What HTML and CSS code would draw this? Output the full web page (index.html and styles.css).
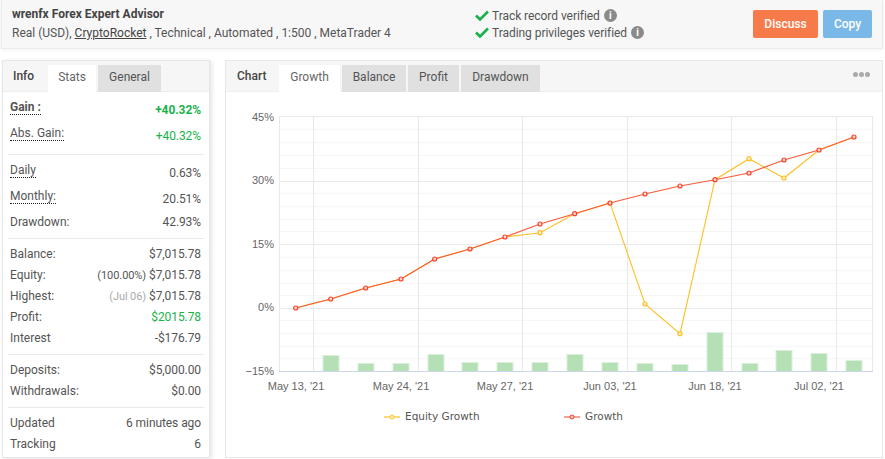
FILE: index.html
```html
<!DOCTYPE html>
<html>

<head>
    <title>wrenfx Forex Expert Advisor</title>
    <link rel="stylesheet" href="styles.css">
</head>

<body>
    <div class="top-bar">
        <div class="system-info">
            <div class="system-name">wrenfx Forex Expert Advisor</div>
            <div class="system-meta">Real (USD), <a href="#">CryptoRocket</a> , Technical , Automated , 1:500 , MetaTrader 4</div>
        </div>
        <div class="verified-list">
            <div class="verified-item">
                <svg class="check" viewBox="0 0 14 11"><path d="M1 5.5 L5 9.5 L13 1.5" /></svg>
                <span>Track record verified</span>
                <span class="info-dot">i</span>
            </div>
            <div class="verified-item">
                <svg class="check" viewBox="0 0 14 11"><path d="M1 5.5 L5 9.5 L13 1.5" /></svg>
                <span>Trading privileges verified</span>
                <span class="info-dot">i</span>
            </div>
        </div>
        <div class="top-buttons">
            <button class="btn btn-discuss">Discuss</button>
            <button class="btn btn-copy">Copy</button>
        </div>
    </div>

    <div class="content">
        <div class="panel stats-panel">
            <div class="tabs">
                <span class="tab-title">Info</span>
                <span class="tab tab-stats active">Stats</span>
                <span class="tab tab-general">General</span>
            </div>
            <div class="stats-body">
                <div class="stat-group">
                    <div class="stat-row tall"><span class="label dotted strong">Gain :</span><span class="value green strong">+40.32%</span></div>
                    <div class="stat-row tall"><span class="label dotted">Abs. Gain:</span><span class="value green">+40.32%</span></div>
                </div>
                <div class="stat-group">
                    <div class="stat-row tall"><span class="label dotted">Daily</span><span class="value">0.63%</span></div>
                    <div class="stat-row tall"><span class="label dotted">Monthly:</span><span class="value">20.51%</span></div>
                    <div class="stat-row"><span class="label">Drawdown:</span><span class="value">42.93%</span></div>
                </div>
                <div class="stat-group">
                    <div class="stat-row"><span class="label">Balance:</span><span class="value">$7,015.78</span></div>
                    <div class="stat-row"><span class="label">Equity:</span><span class="value"><small>(100.00%)</small> $7,015.78</span></div>
                    <div class="stat-row"><span class="label">Highest:</span><span class="value"><small class="muted">(Jul 06)</small> $7,015.78</span></div>
                    <div class="stat-row"><span class="label">Profit:</span><span class="value green">$2015.78</span></div>
                    <div class="stat-row"><span class="label">Interest</span><span class="value">-$176.79</span></div>
                </div>
                <div class="stat-group">
                    <div class="stat-row"><span class="label">Deposits:</span><span class="value">$5,000.00</span></div>
                    <div class="stat-row"><span class="label">Withdrawals:</span><span class="value">$0.00</span></div>
                </div>
                <div class="stat-group">
                    <div class="stat-row"><span class="label">Updated</span><span class="value">6 minutes ago</span></div>
                    <div class="stat-row"><span class="label">Tracking</span><span class="value">6</span></div>
                </div>
            </div>
        </div>

        <div class="panel chart-panel">
            <div class="tabs">
                <span class="tab-title">Chart</span>
                <span class="tab tab-growth active">Growth</span>
                <span class="tab tab-balance">Balance</span>
                <span class="tab tab-profit">Profit</span>
                <span class="tab tab-drawdown">Drawdown</span>
                <span class="more-dots"><i></i><i></i><i></i></span>
            </div>
            <svg class="chart" width="656" height="366" viewBox="226 92 656 366">
                <g class="grid-minor">
                    <path d="M279 129.5H873M279 142.5H873M279 155.5H873M279 168.5H873" />
                    <path d="M279 193.5H873M279 206.5H873M279 219.5H873M279 231.5H873" />
                    <path d="M279 257.5H873M279 270.5H873M279 283.5H873M279 295.5H873" />
                    <path d="M279 320.5H873M279 333.5H873M279 346.5H873M279 358.5H873" />
                </g>
                <g class="grid-major">
                    <path d="M279 116.5H873M279 181.5H873M279 244.5H873M279 308.5H873" />
                    <path d="M279.5 116V372M313.5 116V372M418.5 116V372M522.5 116V372M627.5 116V372M731.5 116V372M836.5 116V372M872.5 116V372" />
                </g>
                <g class="bars">
                    <rect x="323" y="355.500" width="16" height="16" />
                    <rect x="358" y="363.500" width="16" height="8" />
                    <rect x="393" y="363.500" width="16" height="8" />
                    <rect x="428" y="354.500" width="16" height="17" />
                    <rect x="462" y="362.500" width="16" height="9" />
                    <rect x="497" y="362.500" width="16" height="9" />
                    <rect x="532" y="362.500" width="16" height="9" />
                    <rect x="567" y="354.500" width="16" height="17" />
                    <rect x="602" y="362.500" width="16" height="9" />
                    <rect x="637" y="363.500" width="16" height="8" />
                    <rect x="672" y="364.500" width="16" height="7" />
                    <rect x="707" y="332.500" width="16" height="39" />
                    <rect x="742" y="363.500" width="16" height="8" />
                    <rect x="776" y="350.500" width="16" height="21" />
                    <rect x="811" y="353.500" width="16" height="18" />
                    <rect x="846" y="360.500" width="16" height="11" />
                </g>
                <path class="axis-line" d="M279 371.500H873" />

                <polyline class="line-equity" points="295.700,308 330.700,299 365.700,288 401,279 434.700,259 470,249 505,237 540,232.700 574.700,213.700 610,203 645,304 680,333.700 715,179.700 749,158.700 784,178 819,150 854,137" />
                <g class="dots-equity">
                    <circle cx="540" cy="232.700" r="2" />
                    <circle cx="610" cy="203" r="2" />
                    <circle cx="645" cy="304" r="2" />
                    <circle cx="680" cy="333.700" r="2" />
                    <circle cx="749" cy="158.700" r="2" />
                    <circle cx="784" cy="178" r="2" />
                </g>
                <polyline class="line-growth" points="295.700,308 330.700,299 365.700,288 401,279 434.700,259 470,249 505,237 540,224 574.700,213.700 610,203 645,194 680,186 715,179.700 749,173 784,160 819,150 854,137" />
                <g class="dots-growth">
                    <circle cx="295.700" cy="308" r="2" />
                    <circle cx="330.700" cy="299" r="2" />
                    <circle cx="365.700" cy="288" r="2" />
                    <circle cx="401" cy="279" r="2" />
                    <circle cx="434.700" cy="259" r="2" />
                    <circle cx="470" cy="249" r="2" />
                    <circle cx="505" cy="237" r="2" />
                    <circle cx="540" cy="224" r="2" />
                    <circle cx="574.700" cy="213.700" r="2" />
                    <circle cx="610" cy="203" r="2" />
                    <circle cx="645" cy="194" r="2" />
                    <circle cx="680" cy="186" r="2" />
                    <circle cx="715" cy="179.700" r="2" />
                    <circle cx="749" cy="173" r="2" />
                    <circle cx="784" cy="160" r="2" />
                    <circle cx="819" cy="150" r="2" />
                    <circle cx="854" cy="137" r="2" />
                </g>

                <g class="y-labels">
                    <text x="274" y="121">45%</text>
                    <text x="274" y="184">30%</text>
                    <text x="274" y="248">15%</text>
                    <text x="274" y="311">0%</text>
                    <text x="274" y="375">−15%</text>
                </g>
                <g class="x-labels">
                    <text x="296" y="390">May 13, '21</text>
                    <text x="401" y="390">May 24, '21</text>
                    <text x="505" y="390">May 27, '21</text>
                    <text x="610" y="390">Jun 03, '21</text>
                    <text x="715" y="390">Jun 18, '21</text>
                    <text x="819" y="390">Jul 02, '21</text>
                </g>
                <g class="legend">
                    <path class="legend-equity" d="M384 417H400" />
                    <circle class="legend-equity-dot" cx="392" cy="417" r="2" />
                    <text x="405" y="420">Equity Growth</text>
                    <path class="legend-growth" d="M564 417H580" />
                    <circle class="legend-growth-dot" cx="572" cy="417" r="2" />
                    <text x="585" y="420">Growth</text>
                </g>
            </svg>
        </div>
    </div>
</body>

</html>
```

FILE: styles.css
```css
body {
    font-family: Roboto, Arial, sans-serif;
    font-size: 12px;
    color: #555;
    background-color: #fff;
    margin: 0;
    padding: 0;
    width: 885px;
    height: 459px;
    overflow: hidden;
}

.top-bar {
    display: flex;
    align-items: center;
    height: 49px;
    margin: 0 2px 11px 1px;
    padding: 0 10px;
    box-sizing: border-box;
    background-color: #f7f7f7;
    border: 1px solid #ececec;
    border-top: none;
    box-shadow: 0 0 4px rgba(0, 0, 0, 0.08);
}

.system-info {
    width: 463px;
}

.system-name {
    font-weight: bold;
    color: #444;
    margin-bottom: 4px;
    line-height: 15px;
}

.system-meta {
    line-height: 15px;
}

.system-meta a {
    color: #444;
}

.verified-list {
    flex: 1;
}

.verified-item {
    display: flex;
    align-items: center;
    height: 17px;
    letter-spacing: -0.05px;
}

.check {
    width: 14px;
    height: 11px;
    margin-right: 3px;
    fill: none;
    stroke: #1ab14c;
    stroke-width: 2.6;
}

.info-dot {
    width: 13px;
    height: 13px;
    margin-left: 4px;
    border-radius: 50%;
    background-color: #8a8a8a;
    color: #fff;
    font-size: 10px;
    font-weight: bold;
    line-height: 13px;
    text-align: center;
}

.top-buttons {
    display: flex;
    gap: 5px;
}

.btn {
    height: 28px;
    border: none;
    border-radius: 2px;
    color: #fff;
    font-family: Roboto, Arial, sans-serif;
    font-size: 12px;
    font-weight: 500;
    padding: 0;
}

.btn-discuss {
    width: 65px;
    background-color: #f77a4b;
}

.btn-copy {
    width: 49px;
    background-color: #7ab8e8;
}

.content {
    display: flex;
    align-items: flex-start;
    gap: 15px;
    padding: 0 2px 0 2px;
}

.panel {
    height: 398px;
    box-sizing: border-box;
    background-color: #fff;
    border: 1px solid #e6e6e6;
}

.stats-panel {
    width: 209px;
    box-shadow: 2px 1px 4px rgba(0, 0, 50, 0.1);
}

.chart-panel {
    width: 658px;
}

.tabs {
    display: flex;
    align-items: flex-end;
    position: relative;
    height: 31px;
    gap: 2px;
    box-sizing: border-box;
    background-color: #f6f6f6;
    border-bottom: 1px solid #eee;
}

.tab-title {
    align-self: flex-end;
    height: 27px;
    line-height: 25px;
    box-sizing: border-box;
    font-weight: 500;
    color: #444;
}

.stats-panel .tab-title {
    width: 43px;
    padding-left: 10px;
}

.chart-panel .tab-title {
    width: 51px;
    padding-left: 11px;
}

.tab {
    height: 27px;
    line-height: 25px;
    box-sizing: border-box;
    text-align: center;
    background-color: #e0e0e0;
    margin-bottom: -1px;
}

.tab.active {
    background-color: #fff;
    color: #666;
}

.tab-stats { width: 48px; }
.tab-general { width: 63px; }
.tab-growth { width: 61px; }
.tab-balance { width: 64px; }
.tab-profit { width: 51px; }
.tab-drawdown { width: 79px; }

.more-dots {
    position: absolute;
    top: 11px;
    right: 12px;
    display: flex;
    gap: 1px;
}

.more-dots i {
    width: 5px;
    height: 5px;
    border-radius: 50%;
    background-color: #aaa;
}

.stats-body {
    padding: 0 5px;
}

.stat-group {
    padding: 5px 0 5px;
    border-bottom: 1px solid #e9e9e9;
}

.stat-group:last-child {
    border-bottom: none;
}

.stat-row {
    display: flex;
    justify-content: space-between;
    align-items: center;
    height: 21px;
    box-sizing: border-box;
    padding: 0 3px 2px 2px;
}

.stat-row.tall {
    height: 26px;
    align-items: flex-start;
    padding-top: 3px;
    padding-bottom: 0;
}

.stat-row.tall .value {
    margin-top: 3px;
}

.label {
    line-height: 14px;
}

.label.dotted {
    border-bottom: 1px dotted #222;
}

.strong {
    font-weight: bold;
}

.value {
    color: #555;
    white-space: nowrap;
    letter-spacing: -0.08px;
}

.value small {
    font-size: 11px;
}

.value small.muted {
    color: #aaa;
}

.value.green {
    color: #19b34c;
}

.chart {
    display: block;
}

.grid-minor path {
    fill: none;
    stroke: #f6f6f6;
    stroke-width: 1;
}

.grid-major path {
    fill: none;
    stroke: #e9e9e9;
    stroke-width: 1;
}

.axis-line {
    fill: none;
    stroke: #ccd6eb;
    stroke-width: 1;
}

.bars rect {
    fill: #b5e0b5;
    stroke: #daf0da;
    stroke-width: 1;
}

.line-equity {
    fill: none;
    stroke: #fdc025;
    stroke-width: 1.1;
}

.dots-equity circle {
    fill: #fff3cf;
    stroke: #fdc025;
    stroke-width: 1.2;
}

.line-growth {
    fill: none;
    stroke: #fb5a38;
    stroke-width: 1.1;
}

.dots-growth circle {
    fill: #ffd9ce;
    stroke: #f7422f;
    stroke-width: 1.2;
}

.y-labels text {
    font-family: "Liberation Sans", Arial, sans-serif;
    font-size: 11px;
    fill: #666;
    text-anchor: end;
}

.x-labels text {
    font-family: "Liberation Sans", Arial, sans-serif;
    font-size: 11px;
    fill: #666;
    text-anchor: middle;
}

.legend text {
    font-family: "DejaVu Sans", sans-serif;
    font-size: 10.5px;
    fill: #555;
}

.legend-equity {
    stroke: #ffd977;
    stroke-width: 2;
}

.legend-equity-dot {
    fill: #fff3cf;
    stroke: #fdc025;
}

.legend-growth {
    stroke: #ffa494;
    stroke-width: 2;
}

.legend-growth-dot {
    fill: #ffc9b8;
    stroke: #f7422f;
}
```
